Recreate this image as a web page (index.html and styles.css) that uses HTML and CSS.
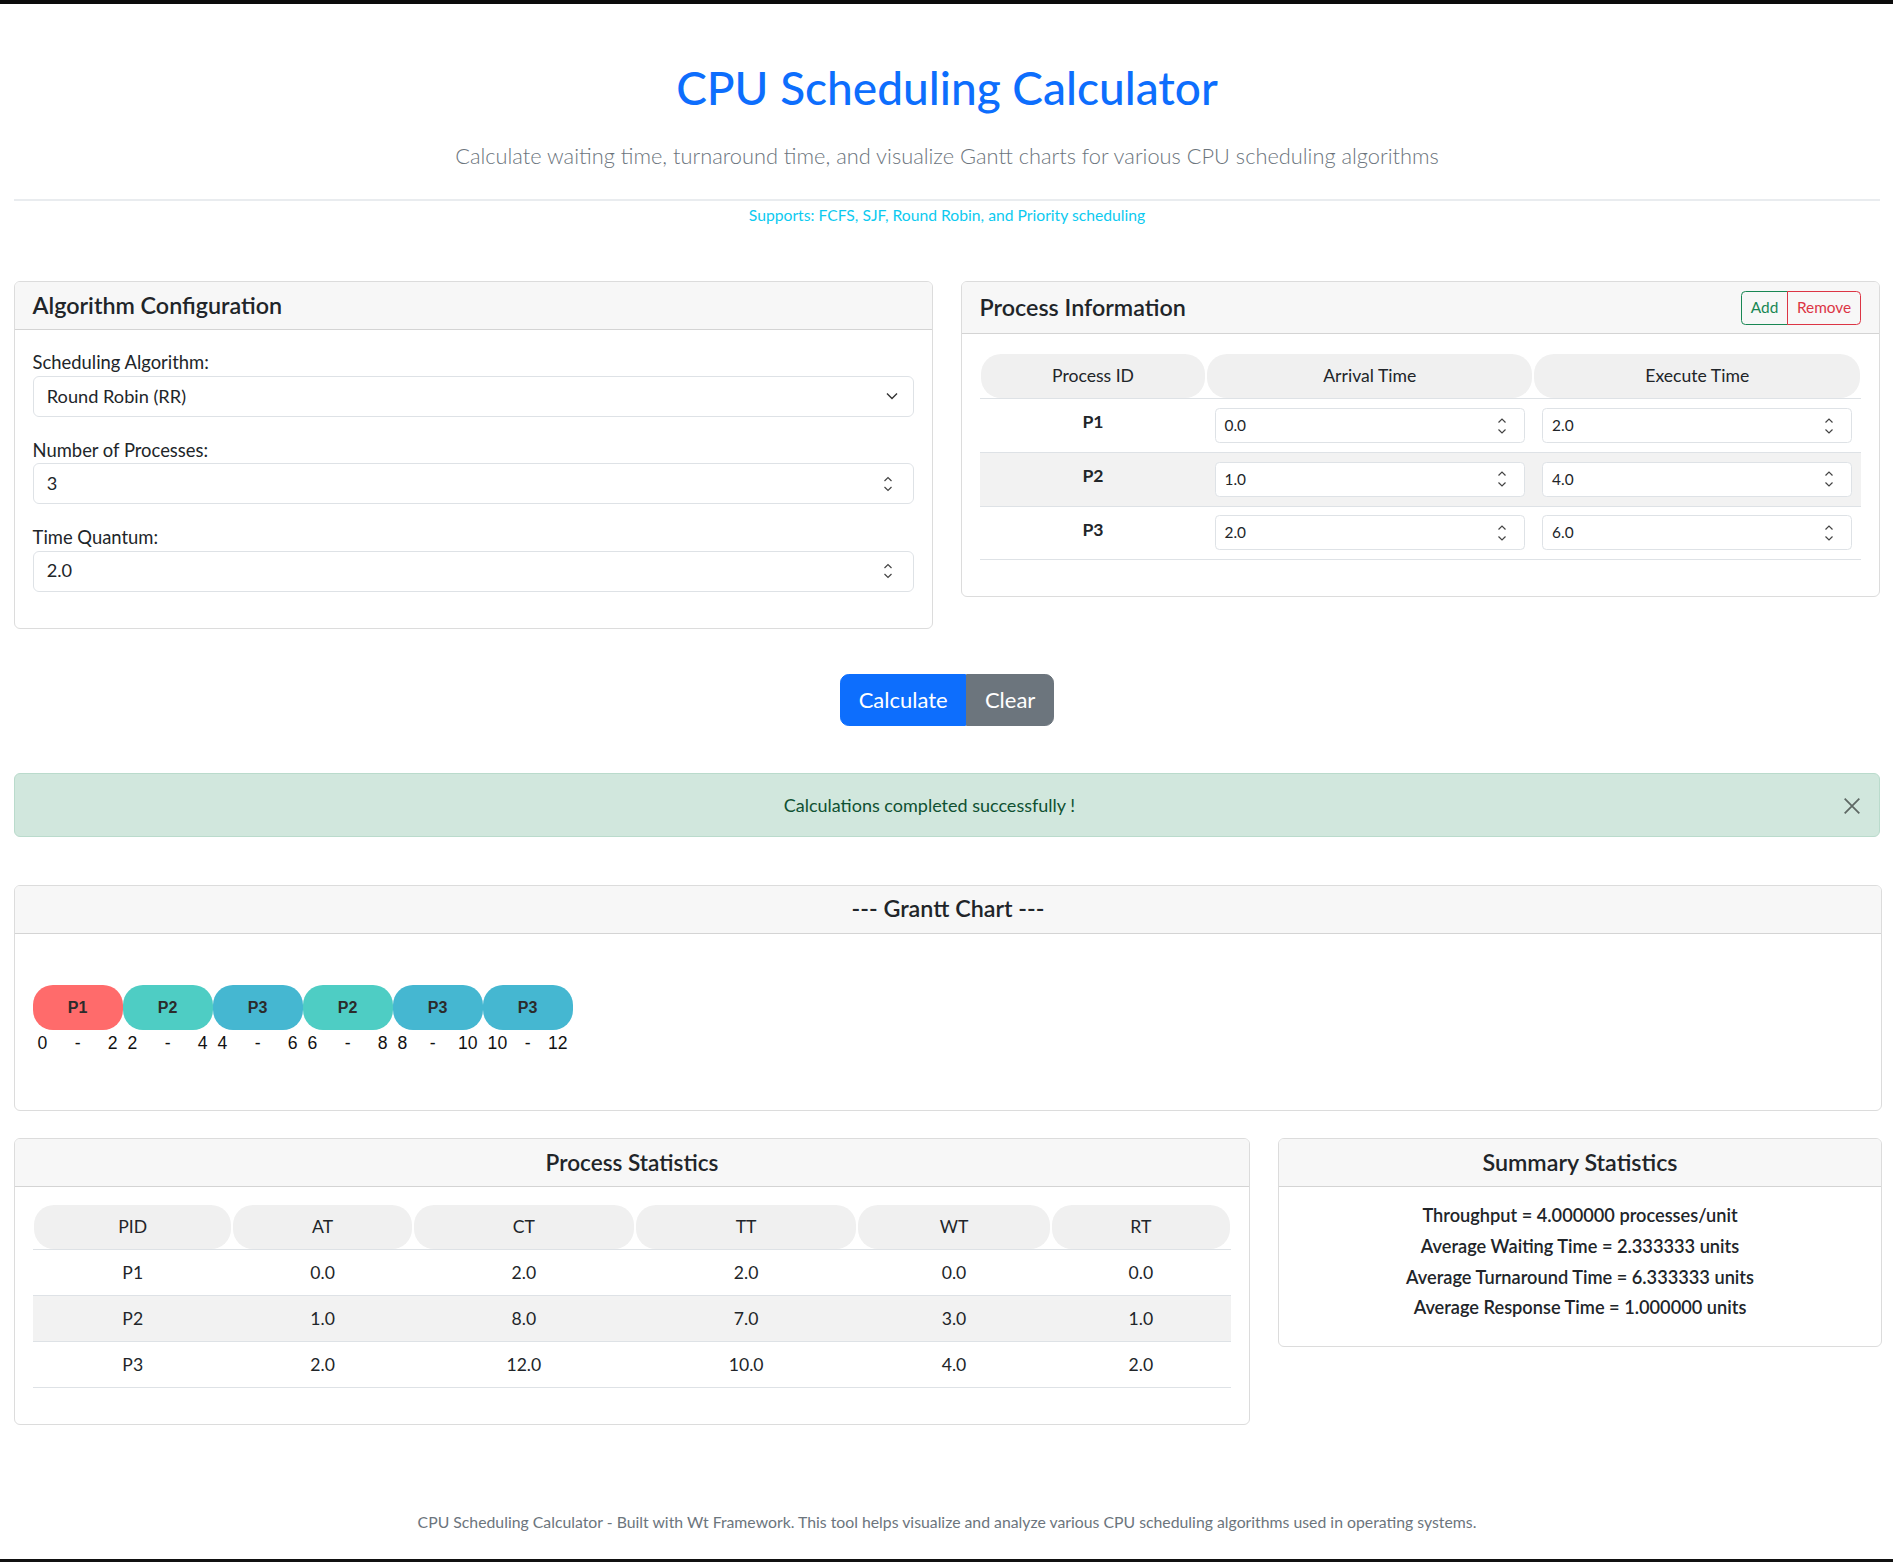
FILE: index.html
```html
<!DOCTYPE html>
<html lang="en">
<head>
<meta charset="utf-8">
<title>CPU Scheduling Calculator</title>
<link rel="stylesheet" href="styles.css">
</head>
<body>
<div class="page">
  <header class="hero">
    <h1 class="title">CPU Scheduling Calculator</h1>
    <p class="lead">Calculate waiting time, turnaround time, and visualize Gantt charts for various CPU scheduling algorithms</p>
    <hr class="divider">
    <p class="supports">Supports: FCFS, SJF, Round Robin, and Priority scheduling</p>
  </header>

  <div class="config-row">
    <section class="card">
      <div class="card-header"><h5 class="card-title">Algorithm Configuration</h5></div>
      <div class="config-body">
        <div class="field">
          <label class="field-label">Scheduling Algorithm:</label>
          <div class="control"><span>Round Robin (RR)</span><svg class="chev" width="12" height="8" viewBox="0 0 12 8"><polyline points="1,1.5 6,6.5 11,1.5" fill="none" stroke="#333" stroke-width="1.4"/></svg></div>
        </div>
        <div class="field">
          <label class="field-label">Number of Processes:</label>
          <div class="control"><span>3</span><svg class="spin" width="10" height="20" viewBox="0 0 10 20"><polyline points="1.5,7 5,3.5 8.5,7" fill="none" stroke="#444" stroke-width="1.2"/><polyline points="1.5,13 5,16.5 8.5,13" fill="none" stroke="#444" stroke-width="1.2"/></svg></div>
        </div>
        <div class="field">
          <label class="field-label">Time Quantum:</label>
          <div class="control"><span>2.0</span><svg class="spin" width="10" height="20" viewBox="0 0 10 20"><polyline points="1.5,7 5,3.5 8.5,7" fill="none" stroke="#444" stroke-width="1.2"/><polyline points="1.5,13 5,16.5 8.5,13" fill="none" stroke="#444" stroke-width="1.2"/></svg></div>
        </div>
      </div>
    </section>

    <section class="card">
      <div class="card-header card-header-tall">
        <h5 class="card-title">Process Information</h5>
        <div class="btn-group-sm">
          <button class="btn-sm btn-add">Add</button><button class="btn-sm btn-remove">Remove</button>
        </div>
      </div>
      <div class="process-body">
        <table class="ptable">
          <thead>
            <tr><th class="col-pid"><div class="pill">Process ID</div></th><th><div class="pill">Arrival Time</div></th><th><div class="pill">Execute Time</div></th></tr>
          </thead>
          <tbody>
            <tr>
              <td class="pid">P1</td>
              <td><div class="control control-sm"><span>0.0</span><svg class="spin" width="10" height="20" viewBox="0 0 10 20"><polyline points="1.5,6.5 5,3 8.5,6.5" fill="none" stroke="#444" stroke-width="1.2"/><polyline points="1.5,13.5 5,17 8.5,13.5" fill="none" stroke="#444" stroke-width="1.2"/></svg></div></td>
              <td><div class="control control-sm"><span>2.0</span><svg class="spin" width="10" height="20" viewBox="0 0 10 20"><polyline points="1.5,6.5 5,3 8.5,6.5" fill="none" stroke="#444" stroke-width="1.2"/><polyline points="1.5,13.5 5,17 8.5,13.5" fill="none" stroke="#444" stroke-width="1.2"/></svg></div></td>
            </tr>
            <tr>
              <td class="pid">P2</td>
              <td><div class="control control-sm"><span>1.0</span><svg class="spin" width="10" height="20" viewBox="0 0 10 20"><polyline points="1.5,6.5 5,3 8.5,6.5" fill="none" stroke="#444" stroke-width="1.2"/><polyline points="1.5,13.5 5,17 8.5,13.5" fill="none" stroke="#444" stroke-width="1.2"/></svg></div></td>
              <td><div class="control control-sm"><span>4.0</span><svg class="spin" width="10" height="20" viewBox="0 0 10 20"><polyline points="1.5,6.5 5,3 8.5,6.5" fill="none" stroke="#444" stroke-width="1.2"/><polyline points="1.5,13.5 5,17 8.5,13.5" fill="none" stroke="#444" stroke-width="1.2"/></svg></div></td>
            </tr>
            <tr>
              <td class="pid">P3</td>
              <td><div class="control control-sm"><span>2.0</span><svg class="spin" width="10" height="20" viewBox="0 0 10 20"><polyline points="1.5,6.5 5,3 8.5,6.5" fill="none" stroke="#444" stroke-width="1.2"/><polyline points="1.5,13.5 5,17 8.5,13.5" fill="none" stroke="#444" stroke-width="1.2"/></svg></div></td>
              <td><div class="control control-sm"><span>6.0</span><svg class="spin" width="10" height="20" viewBox="0 0 10 20"><polyline points="1.5,6.5 5,3 8.5,6.5" fill="none" stroke="#444" stroke-width="1.2"/><polyline points="1.5,13.5 5,17 8.5,13.5" fill="none" stroke="#444" stroke-width="1.2"/></svg></div></td>
            </tr>
          </tbody>
        </table>
      </div>
    </section>
  </div>

  <div class="actions">
    <div class="btn-group-lg">
      <button class="btn-lg btn-primary">Calculate</button><button class="btn-lg btn-secondary">Clear</button>
    </div>
  </div>

  <div class="alert">
    <span>Calculations completed successfully !</span>
    <svg class="alert-close" width="16" height="16" viewBox="0 0 16 16"><path d="M1.5 1.5 14.5 14.5M14.5 1.5 1.5 14.5" stroke="#000" stroke-opacity="0.55" stroke-width="1.6" fill="none"/></svg>
  </div>

  <section class="card wide gantt-card">
    <div class="card-header center-header"><h5 class="card-title">--- Grantt Chart ---</h5></div>
    <div class="card-body">
      <div class="gantt">
        <div class="seg"><div class="bar bar-p1">P1</div><div class="times"><span>0</span><span>-</span><span>2</span></div></div>
        <div class="seg"><div class="bar bar-p2">P2</div><div class="times"><span>2</span><span>-</span><span>4</span></div></div>
        <div class="seg"><div class="bar bar-p3">P3</div><div class="times"><span>4</span><span>-</span><span>6</span></div></div>
        <div class="seg"><div class="bar bar-p2">P2</div><div class="times"><span>6</span><span>-</span><span>8</span></div></div>
        <div class="seg"><div class="bar bar-p3">P3</div><div class="times"><span>8</span><span>-</span><span>10</span></div></div>
        <div class="seg"><div class="bar bar-p3">P3</div><div class="times"><span>10</span><span>-</span><span>12</span></div></div>
      </div>
    </div>
  </section>

  <div class="stats-row">
    <section class="card">
      <div class="card-header center-header"><h5 class="card-title stats-title">Process Statistics</h5></div>
      <div class="stats-body">
        <table class="stable">
          <thead>
            <tr>
              <th class="s1"><div class="pill">PID</div></th>
              <th class="s2"><div class="pill">AT</div></th>
              <th class="s3"><div class="pill">CT</div></th>
              <th class="s4"><div class="pill">TT</div></th>
              <th class="s5"><div class="pill">WT</div></th>
              <th class="s6"><div class="pill">RT</div></th>
            </tr>
          </thead>
          <tbody>
            <tr><td>P1</td><td>0.0</td><td>2.0</td><td>2.0</td><td>0.0</td><td>0.0</td></tr>
            <tr><td>P2</td><td>1.0</td><td>8.0</td><td>7.0</td><td>3.0</td><td>1.0</td></tr>
            <tr><td>P3</td><td>2.0</td><td>12.0</td><td>10.0</td><td>4.0</td><td>2.0</td></tr>
          </tbody>
        </table>
      </div>
    </section>

    <section class="card">
      <div class="card-header center-header"><h5 class="card-title">Summary Statistics</h5></div>
      <div class="summary-body">
        <h6 class="sum-line">Throughput = 4.000000 processes/unit</h6>
        <h6 class="sum-line">Average Waiting Time = 2.333333 units</h6>
        <h6 class="sum-line">Average Turnaround Time = 6.333333 units</h6>
        <h6 class="sum-line">Average Response Time = 1.000000 units</h6>
      </div>
    </section>
  </div>

  <footer class="footer">CPU Scheduling Calculator - Built with Wt Framework. This tool helps visualize and analyze various CPU scheduling algorithms used in operating systems.</footer>
</div>
<div class="bottom-bar"></div>
</body>
</html>
```

FILE: styles.css
```css
* { box-sizing: border-box; }
html, body { margin: 0; padding: 0; }
body {
  font-family: Lato, "Noto Sans", "Liberation Sans", sans-serif;
  font-size: 17.6px;
  line-height: 1.5;
  color: #212529;
  background: #fff;
  border-top: 4px solid #0b0b0b;
}
.page { padding: 0 13px 0 14px; }

.hero { text-align: center; padding-top: 56px; }
.title { margin: 0 0 25px; font-size: 46px; font-weight: 500; line-height: 1.2; color: #0d6efd; }
.lead { margin: 0; font-size: 21.8px; font-weight: 300; color: #6c757d; }
.divider { margin: 26px 0 3px; border: 0; border-top: 2px solid #e9ecef; height: 0; }
.supports { margin: 0; font-size: 15.7px; color: #0dcaf0; }

.config-row {
  display: grid;
  grid-template-columns: 1fr 1fr;
  gap: 28px;
  align-items: start;
  margin-top: 54px;
}

.card { border: 1px solid #dcdcdc; border-radius: 6px; background: #fff; overflow: hidden; }
.card-header {
  display: flex;
  align-items: center;
  justify-content: space-between;
  height: 48px;
  padding: 0 17.6px;
  background: #f7f7f7;
  border-bottom: 1px solid #d4d4d4;
}
.card-header-tall { height: 52px; padding-right: 18px; }
.center-header { justify-content: center; }
.card-title { margin: 0; font-size: 23.3px; font-weight: 600; line-height: 1.2; }
.stats-title { font-size: 22.6px; }
.card-body { padding: 17.6px; }

.config-body { padding: 19px 17.6px 36px; }
.field { margin-bottom: 20px; }
.field:last-child { margin-bottom: 0; }
.field-label { display: block; font-size: 18.4px; line-height: 26.4px; }

.control {
  display: flex;
  align-items: center;
  justify-content: space-between;
  height: 41px;
  padding: 0 20px 0 13.2px;
  border: 1px solid #dee2e6;
  border-radius: 6px;
  background: #fff;
  font-size: 18.2px;
}
.control .chev { margin-right: -5px; }
.control-sm {
  height: 35px;
  padding: 0 17px 0 8.8px;
  font-size: 15.4px;
  border-radius: 4.4px;
}

.btn-group-sm { display: flex; }
.btn-sm {
  font-family: inherit;
  font-size: 15.4px;
  line-height: 1.5;
  padding: 4.4px 8.8px;
  background: transparent;
  border: 1px solid;
  margin: 0;
}
.btn-add { color: #198754; border-color: #198754; border-radius: 4.4px 0 0 4.4px; }
.btn-remove { color: #dc3545; border-color: #dc3545; border-radius: 0 4.4px 4.4px 0; margin-left: -1px; }

.process-body { padding: 20px 18px 36px; }
.ptable, .stable { width: 100%; border-collapse: collapse; table-layout: fixed; }
.ptable th, .stable th {
  padding: 0 1px;
  font-weight: 400;
  text-align: center;
  border-bottom: 1px solid #dee2e6;
}
.pill { background: #f0f0f0; border-radius: 20px; padding: 8.8px; line-height: 26.4px; }
.col-pid { width: 25.65%; }
.ptable td { padding: 8.8px; vertical-align: top; border-bottom: 1px solid #dee2e6; }
.ptable tbody tr:nth-child(even) td, .stable tbody tr:nth-child(even) td { background: #f2f2f2; }
.ptable .pid { text-align: center; font-weight: 700; line-height: 26.4px; padding-top: 10px; }

.actions { display: flex; justify-content: center; margin-top: 45px; }
.btn-group-lg { display: flex; }
.btn-lg {
  font-family: inherit;
  font-size: 22px;
  line-height: 33px;
  padding: 8.8px 17.6px;
  border: 1px solid;
  color: #fff;
  margin: 0;
}
.btn-primary { background: #0d6efd; border-color: #0d6efd; border-radius: 8.8px 0 0 8.8px; }
.btn-secondary { background: #6c757d; border-color: #6c757d; border-radius: 0 8.8px 8.8px 0; }

.alert {
  position: relative;
  margin-top: 47px;
  padding: 17.6px 52.8px 17.6px 17.6px;
  background: #d1e7dd;
  border: 1px solid #badbcc;
  border-radius: 6px;
  color: #0f5132;
  text-align: center;
  font-size: 18px;
  line-height: 26.4px;
}
.alert-close { position: absolute; right: 18px; top: 23px; width: 18px; height: 18px; }

.wide { margin-right: -2px; }
.gantt-card { margin-top: 48px; }
.gantt { display: flex; padding: 34px 0 36px; }
.seg { width: 90px; }
.bar {
  height: 45px;
  border-radius: 20px;
  display: flex;
  align-items: center;
  justify-content: center;
  font-family: "Liberation Sans", Arial, sans-serif;
  font-weight: 700;
  font-size: 16px;
  color: #2b2b2b;
}
.bar-p1 { background: #ff6b6b; }
.bar-p2 { background: #4ecdc4; }
.bar-p3 { background: #45b7d1; }
.times {
  display: flex;
  justify-content: space-between;
  padding: 0 5px;
  font-family: "Liberation Sans", Arial, sans-serif;
  font-size: 17.6px;
  line-height: 26.4px;
  color: #111;
}

.stats-row {
  display: grid;
  grid-template-columns: minmax(0, 1236fr) minmax(0, 604fr);
  gap: 28px;
  align-items: start;
  margin-top: 27px;
  margin-right: -2px;
}
.stats-body { padding: 18px 18px 36px; }
.s1 { width: 16.6%; }
.s2 { width: 15%; }
.s3 { width: 18.5%; }
.s4 { width: 18.5%; }
.s5 { width: 16.1%; }
.s6 { width: 15%; }
.stable td {
  padding: 9.3px 8.8px;
  text-align: center;
  line-height: 26.4px;
  border-bottom: 1px solid #dee2e6;
}

.summary-body { padding: 18px 17.6px 18px; text-align: center; }
.sum-line { margin: 0 0 8.8px; font-size: 18.2px; font-weight: 600; line-height: 21.8px; }

.footer {
  margin-top: 85px;
  text-align: center;
  font-size: 15.8px;
  color: #6c757d;
  line-height: 23.1px;
}

.bottom-bar { position: fixed; left: 0; right: 0; bottom: 0; height: 3px; background: #111; }
```
